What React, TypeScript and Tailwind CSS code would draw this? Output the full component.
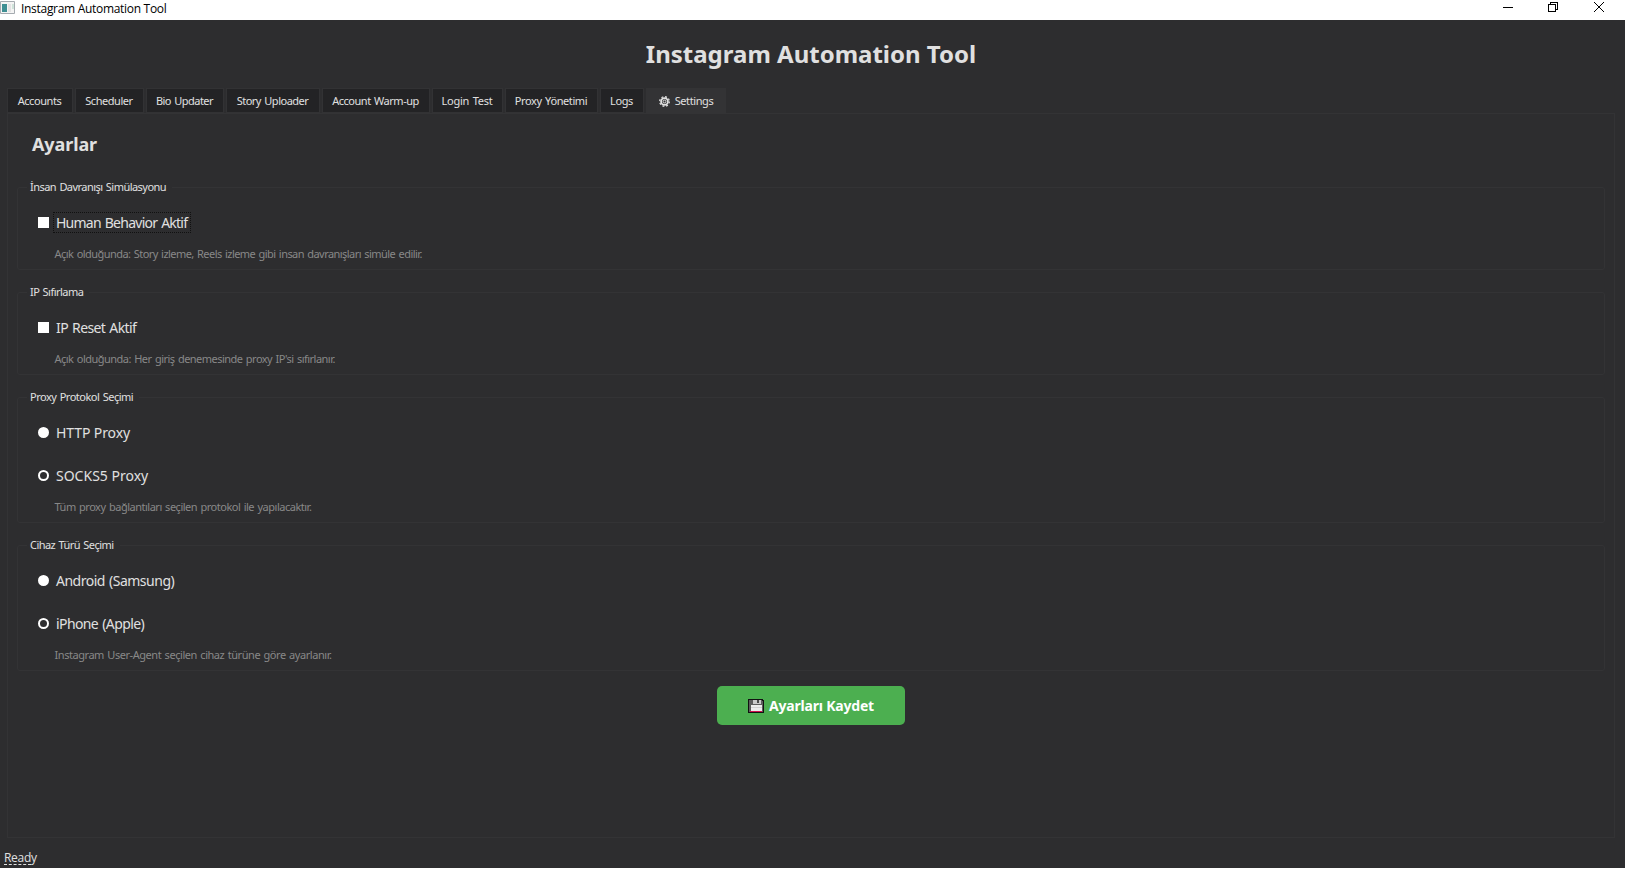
import React, { useState } from 'react';

interface GroupProps {
  title: string;
  titleClass: string;
  hint: string;
  hintClass: string;
  children: React.ReactNode;
}

interface OptionProps {
  label: string;
  selected: boolean;
  onSelect: () => void;
  className?: string;
}

const tabs = [
  { name: 'Accounts', style: 'w-[66px] tracking-[-0.42px]' },
  { name: 'Scheduler', style: 'w-[69px] tracking-[-0.45px]' },
  { name: 'Bio Updater', style: 'w-[78px] tracking-[-0.53px] [word-spacing:1px]' },
  { name: 'Story Uploader', style: 'w-[94px] tracking-[-0.5px] [word-spacing:1px]' },
  { name: 'Account Warm-up', style: 'w-[108px] tracking-[-0.47px] [word-spacing:1px]' },
  { name: 'Login Test', style: 'w-[71px] tracking-[-0.25px] [word-spacing:1px]' },
  { name: 'Proxy Yönetimi', style: 'w-[93px] tracking-[-0.4px] [word-spacing:1px]' },
  { name: 'Logs', style: 'w-[44px] tracking-[-0.35px]' },
];

const GearIcon = () => (
  <svg width="11" height="11" viewBox="0 0 11 11" className="mr-[5px]">
    <circle cx="5.5" cy="5.5" r="3.4" fill="none" stroke="#e0e0e0" strokeWidth="1.8" />
    <circle cx="5.5" cy="5.5" r="4.8" fill="none" stroke="#e0e0e0" strokeWidth="1.3" strokeDasharray="1.9 1.87" />
    <circle cx="5.5" cy="5.5" r="1.4" fill="none" stroke="#e0e0e0" strokeWidth="1" />
  </svg>
);

const FloppyIcon = () => (
  <svg width="16" height="14" viewBox="0 0 16 14" shapeRendering="crispEdges">
    <path d="M0 0h15v1h1v13H0z" fill="#111" />
    <path d="M1 1h13v1h1v11H1z" fill="#5c5c5c" />
    <path d="M5 1h8v4H5z" fill="#c9c9c9" />
    <path d="M9 1h2v3H9z" fill="#4a4a4a" />
    <path d="M3 6h11v6H3z" fill="#ececec" />
    <path d="M3 8h11v1H3z" fill="#d2d2d2" />
    <path d="M2 12h12v1H2z" fill="#d0104c" />
  </svg>
);

const Group: React.FC<GroupProps> = ({ title, titleClass, hint, hintClass, children }) => (
  <fieldset className="mb-[15px] rounded-[3px] border border-[#333335] pb-[8px] pl-[20px]">
    <legend className={`-ml-[11px] h-[14px] pl-[3px] pr-[6px] text-[11px] leading-[14px] [word-spacing:1px] ${titleClass}`}>{title}</legend>
    {children}
    <p className={`ml-[16.500px] mt-[15px] h-[14px] text-[11px] leading-[14px] text-[#888888] [word-spacing:1px] ${hintClass}`}>{hint}</p>
  </fieldset>
);

const Radio: React.FC<OptionProps> = ({ label, selected, onSelect, className }) => (
  <label className={`flex h-[20px] items-center text-[14px] leading-[20px] ${className ?? ''}`}>
    <input type="radio" checked={selected} onChange={onSelect} className="sr-only" />
    <span className={`mr-[7px] h-[11px] w-[11px] rounded-full border-[2px] border-white ${selected ? '' : 'bg-white'}`} />
    <span className="pt-[2px]">{label}</span>
  </label>
);

const App: React.FC = () => {
  const [human, setHuman] = useState(false);
  const [ipReset, setIpReset] = useState(false);
  const [protocol, setProtocol] = useState('socks5');
  const [device, setDevice] = useState('iphone');

  return (
    <div className="h-[870px] w-[1625px] overflow-hidden bg-white">
      <div className="flex h-[868px] flex-col overflow-hidden bg-[#2d2d2f] font-['Noto_Sans',sans-serif] text-[#e0e0e0]">
        {/* Title bar */}
        <header className="flex h-[20px] shrink-0 items-start bg-white font-['Open_Sans',sans-serif] text-[12px] text-black">
          <svg width="15" height="14" viewBox="0 0 15 14" className="mt-px">
            <path d="M0.5 0.5h14v12h-14z" fill="#f4f4f4" stroke="#a5abb0" />
            <path d="M2 3h5v8H2z" fill="#3f8f93" />
            <path d="M8 3h3v8H8z" fill="#e3e3e3" />
            <path d="M12 3h2v5h-2z" fill="#cfe3da" />
          </svg>
          <span className="ml-[6px] leading-[18px] tracking-[-0.3px]">Instagram Automation Tool</span>
          <svg width="104" height="14" viewBox="0 0 104 14" className="ml-auto mr-[19px]" fill="none" stroke="#000" shapeRendering="crispEdges">
            <path d="M1 7.5h10M46.500 4.500h7v7h-7zM48.500 4.500v-2h7v7h-2" />
            <path d="M92 2l10 10M102 2l-10 10" shapeRendering="auto" />
          </svg>
        </header>

        <h1 className="mr-[3px] mt-[16px] h-[36px] text-center text-[24px] font-bold leading-[36px]">Instagram Automation Tool</h1>

        <main className="ml-[7px] mr-[10px] mt-[16px] flex flex-col">
          <nav className="flex h-[25px] gap-[2px] text-[11px]">
            {tabs.map((tab) => (
              <button key={tab.name} className={`h-[25px] border border-[#323234] bg-[#232325] pr-px pt-px ${tab.style}`}>
                {tab.name}
              </button>
            ))}
            <button className="flex h-[25px] w-[80px] items-center justify-center bg-[#333335] pt-px tracking-[-0.4px]">
              <GearIcon />
              Settings
            </button>
          </nav>

          <section className="h-[725px] border border-[#333335] px-[9px] pt-[16px]">
            <h2 className="ml-[15px] h-[28px] text-[18px] font-bold leading-[28px] tracking-[-0.1px]">Ayarlar</h2>
            <div className="mt-[22px]">
              <Group
                title="İnsan Davranışı Simülasyonu"
                titleClass="tracking-[-0.54px]"
                hint="Açık olduğunda: Story izleme, Reels izleme gibi insan davranışları simüle edilir."
                hintClass="tracking-[-0.55px]"
              >
                <label className="mt-[18px] flex h-[20px] items-center text-[14px] leading-[20px]">
                  <input type="checkbox" checked={human} onChange={() => setHuman(!human)} className="h-[11px] w-[11px] appearance-none bg-white" />
                  <span className="ml-[4px] h-[21px] w-[138px] whitespace-nowrap border border-dotted border-[#111] px-[2px] leading-[19px] tracking-[-0.75px] [word-spacing:1px]">
                    Human Behavior Aktif
                  </span>
                </label>
              </Group>
              <Group
                title="IP Sıfırlama"
                titleClass="tracking-[-0.54px]"
                hint="Açık olduğunda: Her giriş denemesinde proxy IP'si sıfırlanır."
                hintClass="tracking-[-0.52px]"
              >
                <label className="mt-[18px] flex h-[20px] items-center text-[14px] leading-[20px] tracking-[-0.6px] [word-spacing:1px]">
                  <input type="checkbox" checked={ipReset} onChange={() => setIpReset(!ipReset)} className="mr-[7px] h-[11px] w-[11px] appearance-none bg-white" />
                  <span className="pt-[2px]">IP Reset Aktif</span>
                </label>
              </Group>
              <Group
                title="Proxy Protokol Seçimi"
                titleClass="tracking-[-0.5px]"
                hint="Tüm proxy bağlantıları seçilen protokol ile yapılacaktır."
                hintClass="tracking-[-0.49px]"
              >
                <Radio className="mt-[18px] tracking-[-0.1px]" label="HTTP Proxy" selected={protocol === 'http'} onSelect={() => setProtocol('http')} />
                <Radio className="mt-[23px]" label="SOCKS5 Proxy" selected={protocol === 'socks5'} onSelect={() => setProtocol('socks5')} />
              </Group>
              <Group
                title="Cihaz Türü Seçimi"
                titleClass="tracking-[-0.55px]"
                hint="Instagram User-Agent seçilen cihaz türüne göre ayarlanır."
                hintClass="tracking-[-0.45px]"
              >
                <Radio className="mt-[18px] tracking-[-0.5px] [word-spacing:1px]" label="Android (Samsung)" selected={device === 'android'} onSelect={() => setDevice('android')} />
                <Radio className="mt-[23px] tracking-[-0.6px] [word-spacing:1px]" label="iPhone (Apple)" selected={device === 'iphone'} onSelect={() => setDevice('iphone')} />
              </Group>
            </div>
            <button className="mx-auto flex h-[39px] w-[188px] items-center justify-center gap-[5px] rounded-[5px] bg-[#4caf50] text-[14px] font-bold tracking-[-0.2px] text-white">
              <FloppyIcon />
              Ayarları Kaydet
            </button>
          </section>
        </main>

        <footer className="mt-auto h-[20px] pl-[4px] font-['Open_Sans',sans-serif] text-[12px] leading-[20px] tracking-[-0.3px]">
          <span className="block h-[17px] w-[27px] border-b border-dashed border-[#e0e0e0]">Ready</span>
        </footer>
      </div>
    </div>
  );
};

export default App;
